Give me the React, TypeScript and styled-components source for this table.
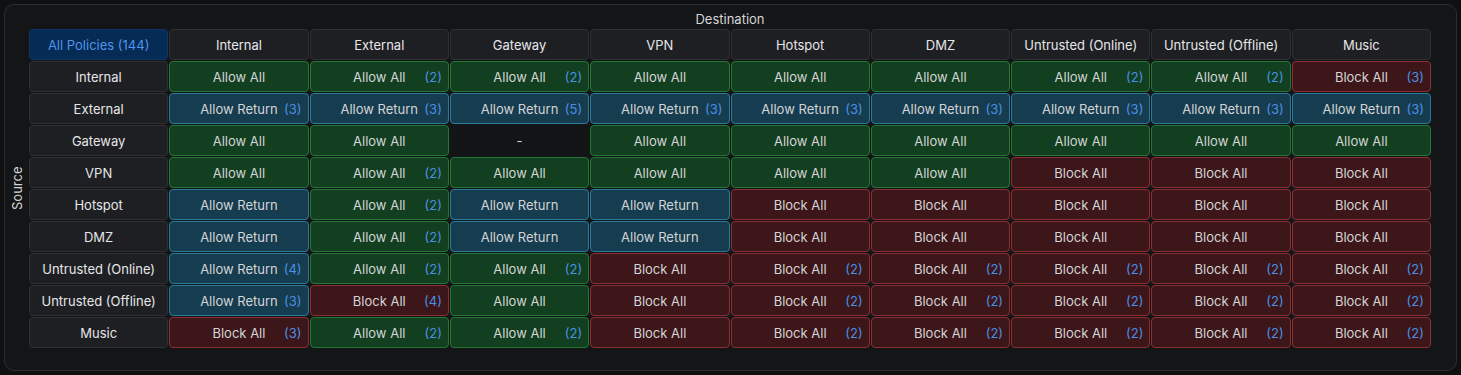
import React from 'react';
import styled, { createGlobalStyle, css } from 'styled-components';

const GlobalStyle = createGlobalStyle`
  body {
    margin: 0;
    padding: 4px;
    background-color: #0f1012;
    font-family: Inter, "Noto Sans", sans-serif;
    color: #e4e4e6;
  }
`;

type Policy = 'allow' | 'return' | 'block' | 'none';

const zones = [
  'Internal',
  'External',
  'Gateway',
  'VPN',
  'Hotspot',
  'DMZ',
  'Untrusted (Online)',
  'Untrusted (Offline)',
  'Music',
];

// A = Allow All, R = Allow Return, B = Block All, - = self ; number = count
const matrix: string[][] = [
  ['A', 'A2', 'A2', 'A', 'A', 'A', 'A2', 'A2', 'B3'],
  ['R3', 'R3', 'R5', 'R3', 'R3', 'R3', 'R3', 'R3', 'R3'],
  ['A', 'A', '-', 'A', 'A', 'A', 'A', 'A', 'A'],
  ['A', 'A2', 'A', 'A', 'A', 'A', 'B', 'B', 'B'],
  ['R', 'A2', 'R', 'R', 'B', 'B', 'B', 'B', 'B'],
  ['R', 'A2', 'R', 'R', 'B', 'B', 'B', 'B', 'B'],
  ['R4', 'A2', 'A2', 'B', 'B2', 'B2', 'B2', 'B2', 'B2'],
  ['R3', 'B4', 'A', 'B', 'B2', 'B2', 'B2', 'B2', 'B2'],
  ['B3', 'A2', 'A2', 'B', 'B2', 'B2', 'B2', 'B2', 'B2'],
];

const kinds: Record<string, { policy: Policy; label: string }> = {
  A: { policy: 'allow', label: 'Allow All' },
  R: { policy: 'return', label: 'Allow Return' },
  B: { policy: 'block', label: 'Block All' },
  '-': { policy: 'none', label: '-' },
};

const palette = {
  allow: { bg: '#123f1f', border: '#267536' },
  return: { bg: '#163d4f', border: '#2a7a9c' },
  block: { bg: '#3c1619', border: '#8c2e34' },
  none: { bg: '#131416', border: '#131416' },
};

const Panel = styled.section`
  border: 1px solid #2c2d31;
  border-radius: 10px;
  background-color: #141517;
  padding: 6px 25px 22px 0;
`;

const Title = styled.div`
  margin-left: 24px;
  text-align: center;
  font-size: 13px;
  line-height: 16px;
  color: #d6d6d8;
  margin-bottom: 2px;
`;

const Body = styled.div`
  display: flex;
`;

const SideLabel = styled.div`
  width: 24px;
  display: flex;
  align-items: center;
  justify-content: center;
  writing-mode: vertical-rl;
  transform: rotate(180deg);
  font-size: 13px;
  color: #d6d6d8;
`;

const Grid = styled.div`
  flex: 1;
  display: grid;
  grid-template-columns: repeat(10, 1fr);
  grid-auto-rows: 31px;
  gap: 1px;
`;

const HeadCell = styled.div<{ $corner?: boolean }>`
  display: flex;
  align-items: center;
  justify-content: center;
  border-radius: 4px;
  font-size: 13px;
  white-space: nowrap;
  background-color: #1e1f23;
  border: 1px solid #2f3034;
  color: #e6e6e8;
  ${({ $corner }) =>
    $corner &&
    css`
      background-color: #062b55;
      border-color: #0b3566;
      color: #4f94ea;
    `}
`;

const PolicyCell = styled.div<{ $policy: Policy }>`
  position: relative;
  display: flex;
  align-items: center;
  justify-content: center;
  border-radius: 4px;
  font-size: 13px;
  white-space: nowrap;
  color: #d4d4d6;
  background-color: ${({ $policy }) => palette[$policy].bg};
  border: 1px solid ${({ $policy }) => palette[$policy].border};
`;

const Count = styled.span`
  position: absolute;
  right: 6px;
  top: 50%;
  transform: translateY(-50%);
  color: #4a8fe6;
  font-size: 13px;
`;

export default function App() {
  return (
    <>
      <GlobalStyle />
      <Panel>
        <Title>Destination</Title>
        <Body>
          <SideLabel>Source</SideLabel>
          <Grid>
            <HeadCell $corner>All Policies (144)</HeadCell>
            {zones.map((z) => (
              <HeadCell key={z}>{z}</HeadCell>
            ))}
            {zones.map((src, r) => (
              <React.Fragment key={src}>
                <HeadCell>{src}</HeadCell>
                {matrix[r].map((code, c) => {
                  const k = kinds[code[0]];
                  const count = code.slice(1);
                  return (
                    <PolicyCell key={c} $policy={k.policy}>
                      {k.label}
                      {count && <Count>({count})</Count>}
                    </PolicyCell>
                  );
                })}
              </React.Fragment>
            ))}
          </Grid>
        </Body>
      </Panel>
    </>
  );
}
